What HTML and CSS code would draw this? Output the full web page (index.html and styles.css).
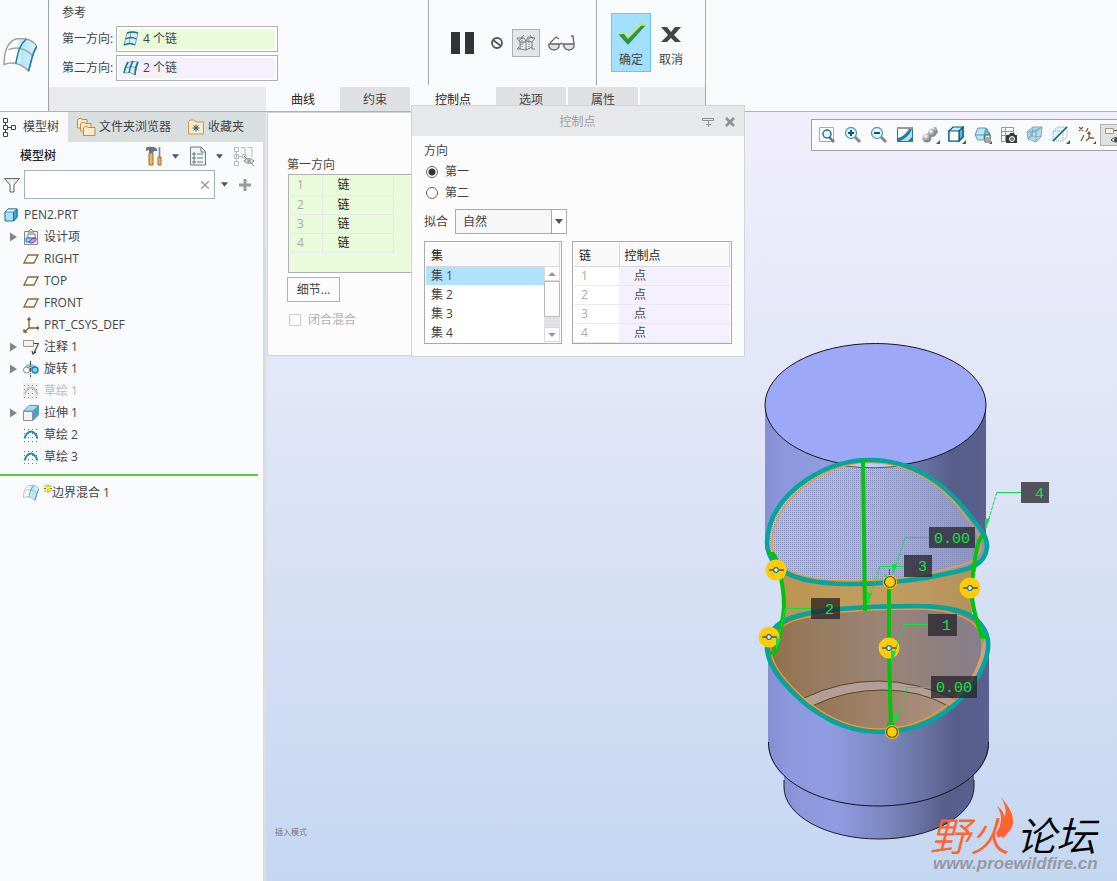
FILE: index.html
```html
<!DOCTYPE html>
<html lang="zh-CN">
  <head>
    <meta charset="UTF-8" />
    <meta name="viewport" content="width=device-width, initial-scale=1.0" />
    <title>PEN2.PRT</title>
    <link rel="stylesheet" href="styles.css" />
  </head>
  <body>
    <!-- Shared icons -->
    <svg class="sprite" aria-hidden="true">
      <linearGradient id="quiltFill" x1="0" y1="0" x2="1" y2="0">
        <stop offset="0.35" stop-color="#fff" />
        <stop offset="0.55" stop-color="#b5e4fb" />
        <stop offset="1" stop-color="#d9f2fe" />
      </linearGradient>
      <symbol id="quilt" viewBox="0 0 32 32">
        <path d="M1 25C1 14 4 4 12 1C18 0 27 0 32 8C28 13 27 22 24 31C17 24 9 22 1 25Z" fill="url(#quiltFill)" stroke="#a2a2a2" stroke-width="1.4" />
        <path d="M5 11C14 7 23 11 28 17" fill="none" stroke="#a2a2a2" stroke-width="1.4" />
        <path d="M22 1C14 8 14 16 12 24M32 8C27 14 27 22 24 31" fill="none" stroke="#177fae" stroke-width="1.4" />
      </symbol>
      <symbol id="plane" viewBox="0 0 16 16">
        <path d="M5 4H15L11 12H1Z" fill="none" stroke="#8a6a32" stroke-width="1.3" />
      </symbol>
      <symbol id="sketch" viewBox="0 0 16 16">
        <path d="M1.5 2V15M5.500 2V15M9.500 2V15M13.500 2V15" stroke="#777" stroke-width="1" stroke-dasharray="1 3" />
        <path d="M1.500 11.500Q4 4.500 8 4.500T14.500 11.500" fill="none" stroke="currentColor" stroke-width="2" />
      </symbol>
      <symbol id="expand" viewBox="0 0 8 10">
        <path d="M0 0.500L7 5L0 9.500Z" fill="#858585" />
      </symbol>
      <symbol id="caret" viewBox="0 0 8 5">
        <path d="M0 0H8L4 5Z" fill="#555" />
      </symbol>
      <symbol id="corner" viewBox="0 0 4 4"><path d="M4 0V4H0Z" fill="#555" /></symbol>
    </svg>

    <header class="ribbon">
      <div class="feature-icon">
        <svg width="34" height="34" viewBox="0 0 32 32"><use href="#quilt" /></svg>
      </div>
      <div class="ribbon-body">
        <div class="groups">
          <section class="group references">
            <h2>参考</h2>
            <div class="reference">
              <label for="dir1">第一方向:</label>
              <div class="collector">
                <div class="collector-inner green">
                  <svg width="16" height="16" viewBox="0 0 16 16">
                    <path d="M1 14L4 2Q9 0 15 2L12 14Q7 11 1 14Z" fill="#d4effb" stroke="#999" />
                    <path d="M8 1L6 13" stroke="#999" />
                    <path d="M4 2Q9 0 15 2M2.500 8Q8 5 13.500 8M1 14Q7 11 12 14" fill="none" stroke="#177196" stroke-width="1.400" />
                  </svg>
                  <input id="dir1" type="text" value="4 个链" readonly />
                </div>
              </div>
            </div>
            <div class="reference">
              <label for="dir2">第二方向:</label>
              <div class="collector">
                <div class="collector-inner violet">
                  <svg width="16" height="16" viewBox="0 0 16 16">
                    <path d="M1 13L4 3Q9 0 15 2L12 15Q7 11 1 13Z" fill="#d4effb" stroke="#999" />
                    <path d="M2.500 8Q8 5 13.500 8" fill="none" stroke="#999" />
                    <path d="M5 2Q2 7 1 13M10 1Q7 6 6 13M15 2Q12 7 12 15" fill="none" stroke="#177196" stroke-width="1.500" />
                  </svg>
                  <input id="dir2" type="text" value="2 个链" readonly />
                </div>
              </div>
            </div>
          </section>

          <section class="group tools">
            <button type="button" class="tool" aria-label="暂停">
              <svg width="24" height="24" viewBox="0 0 24 24"><path d="M1 1H10V23H1ZM15 1H24V23H15Z" fill="#333" /></svg>
            </button>
            <button type="button" class="tool" aria-label="无预览">
              <svg width="14" height="14" viewBox="0 0 14 14">
                <circle cx="7" cy="7" r="5" fill="none" stroke="#555" stroke-width="1.800" />
                <path d="M3 4L11 10" stroke="#555" stroke-width="1.800" />
              </svg>
            </button>
            <button type="button" class="tool pressed" aria-label="分离预览">
              <svg width="20" height="18" viewBox="0 0 20 18" fill="none" stroke="#666" stroke-width="0.800">
                <path d="M1 4H8L10 7L12 3L19 4L16 8V15H19M1 4L4 8V15H1L3 13M4 8H10V16L4 15M10 16L16 13M8 1L3 7M14 1L17 5M10 7L16 8" />
                <path d="M6 2V14M13 4V16M4 11L16 3" stroke-dasharray="1 1" />
              </svg>
            </button>
            <button type="button" class="tool" aria-label="校核预览">
              <svg width="28" height="16" viewBox="0 0 28 16" stroke="#666" stroke-width="1.300">
                <path d="M1 9H11V12Q9 15 6 15T1 12ZM16 9H26V12Q24 15 21 15T16 12Z" fill="#d7e5ec" />
                <path d="M2 8L8 2L11 4M11 10Q13 7 16 10M26 9L25 1H23" fill="none" />
              </svg>
            </button>
          </section>

          <section class="group confirm">
            <button type="button" class="action ok">
              <svg width="32" height="28" viewBox="0 0 32 28">
                <path d="M3 13L9 12L13 17L26 4H31L13 24Z" fill="#2d9255" />
                <path d="M3 13L9 12L13 17L26 4H31" fill="none" stroke="#c7ee24" stroke-width="1.300" />
              </svg>
              <span>确定</span>
            </button>
            <button type="button" class="action">
              <svg width="32" height="28" viewBox="0 0 32 28">
                <path d="M6 6H12L16 11L20 6H26L19 14L26 21H20L16 17L12 21H6L13 14Z" fill="#444" />
              </svg>
              <span>取消</span>
            </button>
          </section>
        </div>

        <nav class="tabs">
          <span class="tab-fill first"></span>
          <button type="button" class="tab open">曲线</button>
          <button type="button" class="tab">约束</button>
          <button type="button" class="tab open">控制点</button>
          <button type="button" class="tab">选项</button>
          <button type="button" class="tab">属性</button>
          <span class="tab-fill last"></span>
        </nav>
      </div>

      <!-- Flyout panels -->
      <section class="panel curves">
        <h3>第一方向</h3>
        <div class="chain-box">
          <table class="chains">
            <tr><td class="num">1</td><td>链</td></tr>
            <tr><td class="num">2</td><td>链</td></tr>
            <tr><td class="num">3</td><td>链</td></tr>
            <tr><td class="num">4</td><td>链</td></tr>
          </table>
        </div>
        <button type="button" class="details">细节...</button>
        <div class="check">
          <input type="checkbox" id="closed" disabled />
          <label for="closed">闭合混合</label>
        </div>
      </section>

      <section class="panel points">
        <header class="panel-title">
          <h3>控制点</h3>
          <button type="button" aria-label="固定">
            <svg width="14" height="12" viewBox="0 0 14 12"><path d="M1.500 2.500H12.500V4.500H1.500Z" fill="none" stroke="#909090" /><path d="M7.500 5V11M5 8.500H10" stroke="#909090" /></svg>
          </button>
          <button type="button" aria-label="关闭">
            <svg width="10" height="10" viewBox="0 0 10 10"><path d="M1 1L9 9M9 1L1 9" stroke="#909090" stroke-width="2.600" /></svg>
          </button>
        </header>
        <div class="panel-body">
          <fieldset>
            <legend>方向</legend>
            <div class="radio"><input type="radio" name="direction" id="first" checked /><label for="first">第一</label></div>
            <div class="radio"><input type="radio" name="direction" id="second" /><label for="second">第二</label></div>
          </fieldset>
          <div class="fit">
            <label for="fit">拟合</label>
            <div class="select">
              <select id="fit"><option>自然</option></select>
              <span class="select-arrow"><svg width="8" height="5"><use href="#caret" /></svg></span>
            </div>
          </div>
          <div class="lists">
            <div class="list sets">
              <table>
                <thead><tr><th>集</th></tr></thead>
                <tbody>
                  <tr class="selected"><td>集 1</td></tr>
                  <tr><td>集 2</td></tr>
                  <tr><td>集 3</td></tr>
                  <tr><td>集 4</td></tr>
                </tbody>
              </table>
              <div class="scrollbar">
                <button type="button" aria-label="向上"><svg width="8" height="4" viewBox="0 0 8 4"><path d="M0 4L4 0L8 4Z" fill="#999" /></svg></button>
                <div class="track"><div class="thumb"></div></div>
                <button type="button" aria-label="向下"><svg width="8" height="4" viewBox="0 0 8 4"><path d="M0 0L4 4L8 0Z" fill="#999" /></svg></button>
              </div>
            </div>
            <div class="list pairs">
              <table>
                <thead><tr><th>链</th><th>控制点</th></tr></thead>
                <tbody>
                  <tr><td class="num">1</td><td>点</td></tr>
                  <tr><td class="num">2</td><td>点</td></tr>
                  <tr><td class="num">3</td><td>点</td></tr>
                  <tr><td class="num">4</td><td>点</td></tr>
                </tbody>
              </table>
            </div>
          </div>
        </div>
      </section>
    </header>

    <main class="workspace">
      <aside class="sidebar">
        <nav class="side-tabs">
          <button type="button" class="side-tab active">
            <svg width="16" height="20" viewBox="0 0 16 20" fill="none" stroke="#444"><path d="M3.500 1.500H7.500V5.500H3.500ZM3.500 8.500H7.500V12.500H3.500ZM3.500 15.500H7.500V19.500H3.500ZM11.500 8.500H15.500V12.500H11.500ZM5.500 5.500V8.500M5.500 12.500V15.500M7.500 10.500H11.500" /></svg>
            模型树
          </button>
          <button type="button" class="side-tab">
            <svg width="20" height="20" viewBox="0 0 20 20" fill="#fdebc8" stroke="#c08b3e"><path d="M1.500 11V2.500Q4 0 7 2.500H11V11Z" /><path d="M4.500 14V6.500Q7 4 10 6.500H15V14Z" /><path d="M7.500 18.500V10.500Q10 8 13 10.500H19V18.500Z" /></svg>
            文件夹浏览器
          </button>
          <button type="button" class="side-tab">
            <svg width="18" height="18" viewBox="0 0 18 18"><path d="M1.500 16V3.500L3 2H7L9 4H16.500V16Z" fill="#fdebc8" stroke="#c79752" /><path d="M9 6.500V13.500M5.500 10H12.500M6.500 7.500L11.500 12.500M11.500 7.500L6.500 12.500" stroke="#145a7a" stroke-width="1" /></svg>
            收藏夹
          </button>
        </nav>
        <div class="tree-head">
          <h2>模型树</h2>
          <button type="button" aria-label="设置">
            <svg width="18" height="20" viewBox="0 0 18 20"><path d="M4 7H8V19H4ZM13 11H16V19H13Z" fill="#eab765" stroke="#9c6d2b" /><path d="M1 2Q2 0 9 1L12 3V5H9L8 7H4V4L1 5Z" fill="#69737d" /><path d="M14.500 1V11" stroke="#7b8792" stroke-width="1.600" /></svg>
            <svg width="7" height="5" class="caret"><use href="#caret" /></svg>
          </button>
          <button type="button" aria-label="显示">
            <svg width="18" height="20" viewBox="0 0 18 20"><path d="M1.500 1H12L16.500 5.500V19H1.500Z" fill="#eef5f8" stroke="#777" /><path d="M12 1V6H16" fill="none" stroke="#777" /><path d="M8 8H14M8 12H14M8 16H14" stroke="#777" /><path d="M4 7H6V9H4ZM4 11H6V13H4ZM4 15H6V17H4Z" fill="none" stroke="#555" stroke-width=".8" /></svg>
            <svg width="7" height="5" class="caret"><use href="#caret" /></svg>
          </button>
          <button type="button" aria-label="隐藏列">
            <svg width="22" height="20" viewBox="0 0 22 20" fill="none" stroke="#bbb"><path d="M1.500 1.500H5.500V5.500H1.500ZM1.500 8.500H5.500V12.500H1.500ZM1.500 15.500H5.500V19.500H1.500ZM3.500 5.500V15.500M5.500 10.500H9M8 1.500H12V16M14.500 1.500H19V11M9.500 8.500H13V12H9.500Z" /><path d="M11 15Q16 10 21 15Q16 20 11 15ZM11 10L21 20" stroke="#888" /><circle cx="16" cy="15" r="2" fill="#999" /></svg>
          </button>
        </div>
        <div class="filter">
          <svg width="16" height="16" viewBox="0 0 16 16"><path d="M0.500 1.500H15.500L10 8V15H6V8Z" fill="#e4e6e8" stroke="#666" /><path d="M8 3V14" stroke="#fff" stroke-width="2" /></svg>
          <div class="search">
            <input type="text" aria-label="过滤" />
            <button type="button" aria-label="清除"><svg width="8" height="8" viewBox="0 0 8 8"><path d="M0 0L8 8M8 0L0 8" stroke="#999" stroke-width="1.300" /></svg></button>
          </div>
          <svg width="7" height="5" class="caret"><use href="#caret" /></svg>
          <button type="button" class="add" aria-label="添加"><svg width="12" height="12" viewBox="0 0 12 12"><path d="M6 0V12M0 6H12" stroke="#9a9a9a" stroke-width="3" /></svg></button>
        </div>
        <ul class="tree">
          <li class="root">
            <svg width="14" height="14" viewBox="0 0 14 14" stroke="#1c6e93"><path d="M1 4L4 1H13V9L9.500 13H1Z" fill="#a7e4fb" /><path d="M9.500 4L13 1V9L9.500 13Z" fill="#3ba7d6" /><path d="M1 4L4 1H13L9.500 4Z" fill="#e3f7ff" stroke-width=".7" /></svg>
            PEN2.PRT
          </li>
          <li>
            <svg width="8" height="10"><use href="#expand" /></svg>
            <svg width="16" height="16" viewBox="0 0 16 16"><path d="M1.500 2.500H14.500V15.500H1.500Z" fill="#eee" stroke="#888" /><path d="M5 3L8 0L11 3Z" fill="#eee" stroke="#777" /><path d="M5 5H12V9H5Z" fill="#fff" stroke="#777" /><path d="M3 9H11V13H3Z" fill="#93d7f0" stroke="#2584aa" /><path d="M6 13Q8 9 13 9Q14 13 8 14Z" fill="#c9a3e6" stroke="#6a3c9b" /></svg>
            设计项
          </li>
          <li><i></i><svg width="16" height="16"><use href="#plane" /></svg>RIGHT</li>
          <li><i></i><svg width="16" height="16"><use href="#plane" /></svg>TOP</li>
          <li><i></i><svg width="16" height="16"><use href="#plane" /></svg>FRONT</li>
          <li>
            <i></i>
            <svg width="16" height="16" viewBox="0 0 16 16" fill="none" stroke="#80602a" stroke-width="1.300"><path d="M6 1V11H16M6 11L1 15M4.500 3L6 1L7.500 3M14 9.500L16 11L14 12.500M1 12V15H4" /></svg>
            PRT_CSYS_DEF
          </li>
          <li>
            <svg width="8" height="10"><use href="#expand" /></svg>
            <svg width="16" height="16" viewBox="0 0 16 16"><path d="M0.500 1.500H10.500V7.500H0.500Z" fill="#fdf1d6" stroke="#999" /><path d="M10.500 4.500H15.500L11 14M9 12L10 15L13 13" fill="none" stroke="#444" stroke-width="1.200" /></svg>
            注释 1
          </li>
          <li>
            <svg width="8" height="10"><use href="#expand" /></svg>
            <svg width="16" height="16" viewBox="0 0 16 16"><path d="M2 5Q7 1 13 5L12 9H4Z" fill="#7cc6e4" /><circle cx="3.500" cy="9" r="3" fill="#fff" stroke="#888" /><circle cx="12" cy="9" r="3" fill="#79d5f7" stroke="#177fae" stroke-width="1.300" /><path d="M7.500 0V16" stroke="#444" stroke-dasharray="4 1 1 1" /></svg>
            旋转 1
          </li>
          <li class="suppressed"><i></i><svg width="16" height="16"><use href="#sketch" /></svg>草绘 1</li>
          <li>
            <svg width="8" height="10"><use href="#expand" /></svg>
            <svg width="16" height="16" viewBox="0 0 16 16"><path d="M0.500 6L6 0.500H15.500L10 6Z" fill="#a5dbf0" stroke="#589db9" /><path d="M10 6L15.500 0.500V10L10 15.500Z" fill="#4aa3c7" stroke="#589db9" /><path d="M0.500 6.500H9.500V15.500H0.500Z" fill="#f2f2f2" stroke="#8e8e8e" /></svg>
            拉伸 1
          </li>
          <li><i></i><svg width="16" height="16" class="sketch"><use href="#sketch" /></svg>草绘 2</li>
          <li><i></i><svg width="16" height="16" class="sketch"><use href="#sketch" /></svg>草绘 3</li>
        </ul>
        <div class="insert-line"></div>
        <ul class="tree pending">
          <li>
            <i></i><svg width="16" height="16"><use href="#quilt" /></svg>
            <span class="new-item"><svg width="8" height="9" viewBox="0 0 9 9"><path d="M4.500 0V9M0 4.500H9M1 1L8 8M8 1L1 8" stroke="#444" /><path d="M2 2H7V7H2Z" fill="#fff100" /></svg>边界混合 1</span>
          </li>
        </ul>
      </aside>

      <section class="viewport">
        <svg class="scene" viewBox="266 112 851 769" preserveAspectRatio="xMaxYMax meet">
          <defs>
            <linearGradient id="body" x1="0" x2="1">
              <stop offset="0" stop-color="#8490d2" />
              <stop offset="0.080" stop-color="#8c97dc" />
              <stop offset="0.280" stop-color="#909ce1" />
              <stop offset="0.550" stop-color="#7a86bd" />
              <stop offset="0.720" stop-color="#6871a3" />
              <stop offset="0.850" stop-color="#565d88" />
              <stop offset="1" stop-color="#5a6190" />
            </linearGradient>
            <linearGradient id="cut" x1="0" x2="1">
              <stop offset="0" stop-color="#b2bdf0" />
              <stop offset="0.500" stop-color="#aab4df" />
              <stop offset="1" stop-color="#8c91ad" />
            </linearGradient>
            <linearGradient id="inside" x1="0" x2="1">
              <stop offset="0" stop-color="#90704a" />
              <stop offset="0.200" stop-color="#967b5f" />
              <stop offset="0.550" stop-color="#9b8478" />
              <stop offset="0.800" stop-color="#8d7e80" />
              <stop offset="1" stop-color="#867f8f" />
            </linearGradient>
            <linearGradient id="gold" x1="0" x2="1">
              <stop offset="0" stop-color="#bc9450" />
              <stop offset="0.500" stop-color="#c39e5f" />
              <stop offset="1" stop-color="#b3925b" />
            </linearGradient>
            <linearGradient id="floor" x1="0" x2="1">
              <stop offset="0" stop-color="#947454" />
              <stop offset="1" stop-color="#ab9284" />
            </linearGradient>
            <pattern id="dots" width="2" height="2" patternUnits="userSpaceOnUse">
              <rect width="1" height="1" fill="#8790bd" />
            </pattern>
            <path id="upperLoop" d="M870 460C915 460 948 487 967 512C978 526 988 535 987 548C985 564 972 568 955 572C925 579 890 584 850 584C810 584 785 576 775 564C765 552 766 537 770 525C780 492 823 460 870 460Z" />
            <path id="lowerLoop" d="M917 606C945 606 968 611 978 621C988 631 991 645 985 661C975 690 940 732 880 732C830 732 797 698 783 682C774 671 766 658 767 645C768 632 777 623 790 618C820 608 880 606 917 606Z" />
            <clipPath id="lowerClip"><use href="#lowerLoop" /></clipPath>
            <g id="handle">
              <circle r="10.500" fill="#ffcc0a" />
              <path d="M-7 0H8" stroke="#333" stroke-width="1.200" />
              <circle r="2.300" fill="#e6fbff" stroke="#1f6f87" stroke-width="1.200" />
            </g>
            <g id="knob">
              <circle r="7" fill="#ffcc0a" />
              <circle r="5.500" fill="#ffcc0a" stroke="#4c4415" stroke-width="1.200" />
            </g>
          </defs>

          <!-- Solid -->
          <path d="M784 740V787C784 816 827 839 879 839S974 816 974 787V740Z" fill="url(#body)" />
          <path d="M784 780V787C784 816 827 839 879 839S974 816 974 787V780" fill="none" stroke="#1c1f2e" />
          <path d="M768 650V744C768 778 817 806 878 806S989 778 989 744V645Z" fill="url(#body)" />
          <path d="M768.500 742C768 778 817 806 878 806S989 778 988.500 742" fill="none" stroke="#11131c" />
          <path d="M765 405V550L800 575H960L986 545V405Z" fill="url(#body)" />
          <ellipse cx="875.500" cy="405" rx="110.500" ry="61.500" fill="#9da9f6" stroke="#14161f" />

          <!-- Blend surface -->
          <path d="M776 565Q850 595 977 566Q968 590 973 612L960 625H783Q786 590 776 565Z" fill="url(#gold)" />
          <use href="#upperLoop" fill="url(#cut)" />
          <use href="#upperLoop" fill="url(#dots)" />
          <path d="M845 466Q876 470 906 465L875 460Z" fill="#bdcafb" />
          <path d="M845 466Q876 470 906 465" fill="none" stroke="#555" />
          <use href="#lowerLoop" fill="url(#inside)" />
          <g clip-path="url(#lowerClip)">
            <path d="M800 700Q840 681 878 681T960 701L952 708Q918 690 883 690T812 707Z" fill="#b39d98" />
            <path d="M812 706Q845 690 883 690T950 707L920 740H850Z" fill="url(#floor)" />
            <path d="M804 698Q840 681 878 681T960 701M812 706Q845 690 883 690T950 707" fill="none" stroke="#5c451f" />
            <path d="M984 625Q986 665 955 700L970 700L994 650Z" fill="#b8a4a5" />
          </g>
          <g fill="none">
            <path d="M870 462.500C915 462.500 944 488 963 513C974 528 982 538 981 548C978 561 968 564 950 568C925 575 890 581 850 581C812 581 789 574 779 563C770 552 771 538 775 526C786 493 827 462.500 870 462.500Z" stroke="#f59b27" stroke-width="1.300" />
            <path d="M917 609C943 609 964 615 974 624C983 634 984 646 980 660C970 688 935 729 880 729C833 729 800 697 786 680C776 668 770 658 771 646C774 633 780 626 793 621C822 611 880 609 917 609Z" stroke="#f59b27" stroke-width="1.300" />
            <use href="#upperLoop" stroke="#03a59c" stroke-width="4.500" />
            <use href="#lowerLoop" stroke="#03a59c" stroke-width="4.500" />
          </g>

          <!-- Chains -->
          <g fill="none" stroke="#00c40a" stroke-width="4" stroke-linejoin="round">
            <path d="M863 460L865 611" />
            <path d="M889 583V655L891 730" />
            <path d="M768 554H773Q777 558 780 573Q786 600 783 616Q781 630 776 649L774 653H769" />
            <path d="M986 537H981Q977 543 975 560Q970 590 973 604Q975 615 980 631L982 637H987" />
            <path d="M887 725H895" />
          </g>

          <!-- Leaders -->
          <g fill="none" stroke="#0ce048">
            <path d="M1021 492.500H997M929 537.500H905M904 566.500H880M811 608.500H785M928 624.500H904M931 687.500H907" />
            <path d="M997 492L986 528M905 538L894 572M880 566L868 604" stroke-dasharray="4 1" />
          </g>

          <use href="#handle" x="776" y="570" />
          <use href="#handle" x="970" y="588" />
          <use href="#handle" x="769" y="637" />
          <use href="#handle" x="889" y="648" />
          <path d="M889.500 569V577" stroke="#177fae" />
          <use href="#knob" x="890" y="582" />
          <use href="#knob" x="892" y="732" />
          <path d="M904 625L892 660M785 609L777 647M907 687L896 722" fill="none" stroke="#0ce048" stroke-dasharray="4 1" />
          <path d="M985 530L990 518L985 519ZM893 575L897 564L892 564ZM867 604L872 594L867 592ZM891 663L896 652L891 650ZM895 724L899 713L894 713ZM776 650L781 639L776 638ZM884 574L889 577L886 578Z" fill="#0ce048" />

          <!-- Dimension tags -->
          <g class="tag-box">
            <rect x="1021" y="482" width="28" height="21" />
            <rect x="929" y="527" width="46" height="21" />
            <rect x="904" y="555" width="28" height="22" />
            <rect x="811" y="598" width="29" height="21" />
            <rect x="928" y="614" width="29" height="22" />
            <rect x="931" y="676" width="46" height="22" />
          </g>
          <g class="tag-text">
            <text x="1044" y="498">4</text>
            <text x="970" y="543">0.00</text>
            <text x="927" y="571">3</text>
            <text x="834" y="614">2</text>
            <text x="951" y="630">1</text>
            <text x="972" y="692">0.00</text>
          </g>

          <!-- Site mark -->
          <text class="mark fire" x="930" y="851">野火</text>
          <text class="mark" x="1016" y="851">论坛</text>
          <path d="M1001 797C1008 806 1014 813 1013 823C1012 832 1004 835 998 838L996 833C1002 825 1003 815 997 806C1003 810 1004 814 1005 817C1007 809 1004 803 1001 797Z" fill="#ff642f" />
          <text class="mark-url" x="933" y="869">www.proewildfire.cn</text>
        </svg>

        <div class="view-toolbar">
          <button type="button" aria-label="重新调整"><svg width="18" height="18" viewBox="0 0 18 18"><path d="M1.500 1.500H15.500V15.500H1.500Z" fill="#fff" stroke="#aaa" /><path d="M11 11L16 16" stroke="#777" stroke-width="2.500" /><circle cx="9" cy="8" r="4" fill="#e2f5fd" stroke="#1e7498" stroke-width="1.500" /></svg></button>
          <button type="button" aria-label="放大"><svg width="18" height="18" viewBox="0 0 18 18"><path d="M11 11L16 16" stroke="#888" stroke-width="3" /><circle cx="7" cy="7" r="5.500" fill="#e2f5fd" stroke="#5a9ab5" stroke-width="1.300" /><path d="M7 4V10M4 7H10" stroke="#07577b" stroke-width="2" /></svg></button>
          <button type="button" aria-label="缩小"><svg width="18" height="18" viewBox="0 0 18 18"><path d="M11 11L16 16" stroke="#888" stroke-width="3" /><circle cx="7" cy="7" r="5.500" fill="#e2f5fd" stroke="#5a9ab5" stroke-width="1.300" /><path d="M4 7H10" stroke="#07577b" stroke-width="2" /></svg></button>
          <button type="button" aria-label="重画"><svg width="18" height="18" viewBox="0 0 18 18"><path d="M1 1H17V16H1Z" fill="#267da2" /><path d="M2 3H13Q9 10 2 12Z" fill="#fff" /><path d="M16 3V11L12 15H4Q13 11 16 3Z" fill="#b7e1f1" /><path d="M1 1H17V3H1Z" fill="#999" /></svg></button>
          <button type="button" aria-label="显示样式"><svg width="18" height="18" viewBox="0 0 18 18"><radialGradient id="ball" cx=".35" cy=".3"><stop stop-color="#fff" /><stop offset="1" stop-color="#8a8a8a" /></radialGradient><path d="M9 2L14 1L16 6L13 10H8Z" fill="url(#ball)" /><circle cx="10" cy="7" r="4" fill="url(#ball)" /><circle cx="5" cy="12" r="4.500" fill="url(#ball)" /><use href="#corner" x="14" y="14" width="4" height="4" /></svg></button>
          <button type="button" aria-label="着色"><svg width="18" height="18" viewBox="0 0 18 18" stroke="#07577b" stroke-width="1.200"><path d="M1 5L5 1H15V11L11 15H1Z" fill="#bfe9f9" /><path d="M11 5L15 1V11L11 15Z" fill="#5eb7da" /><path d="M1 5H11V15H1Z" fill="#fff" /><use href="#corner" x="14" y="14" width="4" height="4" stroke="none" /></svg></button>
          <button type="button" aria-label="已保存方向"><svg width="18" height="18" viewBox="0 0 18 18"><path d="M1 9L4 2H12L16 8L12 14H4Z" fill="#bde6f6" stroke="#589cb8" /><path d="M1 9H10M10 9L12 2L16 8V13H10Z" fill="#70b5d1" stroke="#589cb8" /><path d="M11 9H16V16H11Z" fill="#fff" stroke="#555" /><path d="M12 12H15M12 14H15" stroke="#555" /><use href="#corner" x="15" y="15" width="3" height="3" /></svg></button>
          <button type="button" aria-label="视图管理器"><svg width="18" height="18" viewBox="0 0 18 18"><path d="M1.500 1.500H13.500V15.500H1.500ZM1 5.500H14M1 9.500H14M5.500 1V16" fill="#fff" stroke="#999" /><path d="M6 9H9L10 7H14L15 9H17V17H6Z" fill="#3a3a3a" /><circle cx="12" cy="13" r="2.500" fill="#777" stroke="#fff" /></svg></button>
          <button type="button" aria-label="透视图"><svg width="18" height="18" viewBox="0 0 18 18" stroke="#80aabd"><path d="M1 6L7 1H16L15 11L10 16L2 13Z" fill="#b3dbeb" /><path d="M1 6L10 6L16 1M10 6V16M7 1L6 10L2 13M6 10L15 11" fill="#84bdd6" /></svg></button>
          <button type="button" aria-label="剖面"><svg width="18" height="18" viewBox="0 0 18 18"><path d="M1 6L5 1H15L1 15Z" fill="#dff3fa" /><path d="M1 6L5 1H15V11L11 15H1ZM1 5H11V15" fill="none" stroke="#7aa9bd" stroke-dasharray="1 1" /><path d="M1 15L15 1" stroke="#07577b" stroke-width="1.400" /><use href="#corner" x="14" y="14" width="4" height="4" /></svg></button>
          <button type="button" aria-label="基准显示"><svg width="18" height="18" viewBox="0 0 18 18" fill="none" stroke="#80602a" stroke-width="1.300"><path d="M1 1L5 5M5 1L1 5M10 2L8 6M6 9L3 15M11 6V12H16M11 12L8 15M9.500 8L11 6L12.500 8" /><use href="#corner" x="15" y="15" width="3" height="3" stroke="none" /></svg></button>
          <button type="button" class="pressed" aria-label="注释显示"><svg width="18" height="18" viewBox="0 0 18 18"><path d="M1.500 2.500H9.500V7.500H1.500Z" fill="#fdf1d6" stroke="#999" /><path d="M10 4.500H15L13 9" fill="none" stroke="#555" /><path d="M7 14Q12 9 17 14Q12 18 7 14Z" fill="#fff" stroke="#444" /><circle cx="12" cy="14" r="2" fill="#444" /></svg></button>
        </div>

        <p class="mode">插入模式</p>
      </section>
    </main>
  </body>
</html>
```

FILE: styles.css
```css
* {
  box-sizing: border-box;
}

body {
  font-family: "Open Sans", "Noto Sans CJK SC", sans-serif;
  font-size: 12px;
  line-height: 18px;
  color: #444;
  margin: 0;
  min-height: 100vh;
  display: flex;
  flex-direction: column;
  background-color: #f8fafc;
}

h2,
h3,
p,
ul,
fieldset {
  margin: 0;
  padding: 0;
  border: none;
  font-size: 12px;
  font-weight: normal;
}

button,
input,
select {
  font: inherit;
  color: inherit;
}

button {
  background: none;
  border: none;
  padding: 0;
  display: flex;
  align-items: center;
  justify-content: center;
}

table {
  border-collapse: collapse;
}

td,
th {
  padding: 0;
  font-weight: normal;
  text-align: left;
}

svg {
  display: block;
  flex: none;
}

.sprite {
  position: absolute;
  width: 0;
  height: 0;
}

/* Ribbon */
.ribbon {
  position: relative;
  z-index: 1;
  display: flex;
  height: 112px;
  border-bottom: 1px solid #adb3b3;
}

.feature-icon {
  width: 49px;
  padding: 38px 3px;
  border-right: 1px solid #9aa5a5;
}

.ribbon-body {
  display: flex;
  flex-direction: column;
  border-right: 1px solid #a3a9a9;
}

.groups {
  display: flex;
  height: 87px;
}

.group {
  display: flex;
  height: 85px;
}

.references {
  flex-direction: column;
  width: 380px;
  padding: 4px 13px;
  gap: 3px;
  border-right: 1px solid #a3a9a9;
}

.reference {
  display: flex;
  align-items: center;
  gap: 3px;
}

.references h2 {
  margin-bottom: 1px;
}

.collector {
  width: 162px;
  height: 26px;
  padding: 2px;
  background-color: #fff;
  border: 1px solid #b0b0b0;
}

.reference label {
  width: 51px;
  white-space: nowrap;
}

.collector-inner {
  display: flex;
  align-items: center;
  gap: 4px;
  height: 20px;
  padding-left: 4px;
}

.collector-inner input {
  width: 100px;
  padding: 0;
  border: none;
  background: none;
}

.green {
  background-color: #eafbdc;
}

.violet {
  background-color: #f4f0fd;
}

.tools {
  align-items: center;
  width: 168px;
  padding-left: 21px;
  gap: 8px;
  border-right: 1px solid #a3a9a9;
}

.tool {
  height: 28px;
}

.tool:first-child {
  margin-right: 8px;
}

.tool.pressed {
  width: 28px;
  background-color: #e4e5e7;
  border: 1px solid #b0b0b0;
}

.confirm {
  padding: 13px 14px;
}

.action {
  flex-direction: column;
  width: 40px;
  height: 59px;
  gap: 2px;
  padding-top: 5px;
}

.action.ok {
  background-color: #a3dfff;
  border: 1px solid #67c5f8;
}

.tabs {
  display: flex;
  gap: 2px;
  height: 24px;
}

.tab {
  padding: 2px 23px 0;
  background-color: #dfe0e1;
}

.tab.open {
  background-color: #f8fafc;
  color: #222;
}

.tab-fill {
  background-color: #e9eaec;
}

.tab-fill.first {
  width: 217px;
}

.tab-fill.last {
  width: 65px;
}

/* Flyout panels */
.panel {
  position: absolute;
  background-color: #fcfcfc;
  border: 1px solid #cfd5d5;
}

.curves {
  top: 112px;
  left: 267px;
  width: 145px;
  height: 244px;
  padding: 43px 0 0 19px;
  overflow: hidden;
}

.chain-box {
  height: 99px;
  margin: 0 0 4px 1px;
  padding: 1px;
  background-color: #eafbdc;
  border: 1px solid #b0b0b0;
  border-right: none;
}

.chains td {
  width: 71px;
  height: 19px;
  padding-left: 15px;
  border-right: 1px solid #e6e8ee;
  border-bottom: 1px solid #e6e8ee;
  color: #222;
}

.chains .num {
  width: 32px;
  padding-left: 7px;
}

.chains .num,
.pairs .num {
  color: #aaa;
}

.details {
  width: 53px;
  height: 25px;
  border: 1px solid #b0b0b0;
}

.check {
  display: flex;
  align-items: center;
  gap: 7px;
  margin: 9px 0 0 2px;
  color: #b0b0b0;
}

.check input {
  appearance: none;
  width: 12px;
  height: 12px;
  margin: 0;
  border: 1px solid #d0d0d0;
}

.points {
  top: 105px;
  left: 411px;
  width: 334px;
}

.panel-title {
  display: flex;
  align-items: center;
  gap: 10px;
  height: 30px;
  padding: 1px 9px 0 0;
  background-color: #e6e8ea;
  color: #a0a0a0;
}

.panel-title h3 {
  flex: 1;
  padding-left: 52px;
  text-align: center;
}

.panel-body {
  padding: 6px 12px 12px;
}

legend {
  padding: 0;
  height: 19px;
}

.radio {
  display: flex;
  align-items: center;
  gap: 7px;
  height: 21px;
  padding-left: 2px;
}

.radio input {
  appearance: none;
  width: 12px;
  height: 12px;
  margin: 0;
  border: 1px solid #666;
  border-radius: 50%;
  background-color: #fff;
}

.radio input:checked {
  background: radial-gradient(circle, #333 3px, #fff 4px);
}

.fit {
  display: flex;
  align-items: center;
  gap: 7px;
  margin: 6px 0 7px;
}

.select {
  display: grid;
  width: 112px;
  height: 25px;
}

.select select,
.select-arrow {
  grid-area: 1 / 1;
}

.select select {
  appearance: none;
  padding: 0 7px;
  background-color: #f7f7f7;
  border: 1px solid #a9a9a9;
  border-radius: 0;
}

.select-arrow {
  display: flex;
  align-items: center;
  justify-content: center;
  justify-self: end;
  width: 16px;
  border: 1px solid #a9a9a9;
  background-color: #fff;
  pointer-events: none;
}

.lists {
  display: flex;
  gap: 10px;
}

.list {
  height: 103px;
  padding: 1px;
  background-color: #fff;
  border: 1px solid #a9a9a9;
}

.list table {
  width: 100%;
}

.list th {
  height: 23px;
  padding: 3px 0 0 5px;
  background-color: #f9f9f9;
  border-right: 1px solid #d4d8d8;
  border-bottom: 1px solid #d4d8d8;
  color: #222;
}

.list td {
  height: 19px;
}

.sets {
  display: grid;
  width: 138px;
}

.sets table,
.scrollbar {
  grid-area: 1 / 1;
}

.sets td {
  padding-left: 5px;
}

.selected td {
  background-color: #afe2ff;
}

.scrollbar {
  display: flex;
  flex-direction: column;
  justify-self: end;
  width: 16px;
  height: 76px;
  margin-top: 23px;
  background-color: #fff;
}

.scrollbar button {
  height: 15px;
  border: 1px solid #dadada;
}

.track {
  flex: 1;
  background-color: #e0e1e3;
}

.thumb {
  height: 36px;
  background-color: #fbfbfb;
  border: 1px solid #bbb;
}

.pairs {
  width: 160px;
}

.pairs td {
  padding-left: 15px;
  background-color: #f4f0fd;
  border-bottom: 1px solid #e8e8ee;
}

.pairs .num {
  width: 45px;
  padding-left: 7px;
  background-color: #fff;
}

/* Workspace */
.workspace {
  flex: 1;
  display: grid;
  grid-template-columns: 266px 1fr;
}

.sidebar {
  border-right: 3px solid #d9dfdf;
}

.side-tabs {
  display: flex;
  height: 30px;
  background-color: #d9dfdf;
}

.side-tab {
  gap: 3px;
  padding: 0 8px;
}

.side-tab.active {
  gap: 7px;
  width: 68px;
  padding: 0 9px 0 0;
  background-color: #f8fafc;
}

.tree-head {
  display: flex;
  align-items: center;
  gap: 10px;
  height: 28px;
  padding-left: 20px;
}

.tree-head h2 {
  width: 115px;
  font-weight: 500;
  color: #222;
}

.tree-head button {
  gap: 9px;
}

.filter {
  display: flex;
  align-items: center;
  gap: 6px;
  padding-left: 4px;
}

.search {
  display: flex;
  align-items: center;
  width: 191px;
  height: 29px;
  margin-left: -2px;
  padding-right: 5px;
  background-color: #fff;
  border: 1px solid #a4b4b4;
}

.search input {
  flex: 1;
  min-width: 0;
  border: none;
  outline: none;
  background: none;
}

.add {
  margin-left: 5px;
}

.tree {
  list-style: none;
  margin-top: 5px;
}

.tree li {
  display: flex;
  align-items: center;
  height: 22px;
  gap: 5px;
  padding-left: 10px;
}

.tree li i {
  width: 8px;
}

.tree .root {
  gap: 6px;
  padding-left: 4px;
}

.sketch {
  color: #2489b8;
}

.suppressed {
  color: #bcbcbc;
}

.suppressed svg {
  background-color: #ececec;
  color: #bbb69d;
  opacity: 0.8;
}

.insert-line {
  height: 2px;
  width: 258px;
  margin-top: 6px;
  background-color: #5ec93f;
}

.pending {
  margin-top: 6px;
}

.new-item {
  display: flex;
}

.viewport {
  display: grid;
  overflow: hidden;
  background: linear-gradient(#f1eefc, #e4e7f8 32%, #c4d7f1);
}

.scene,
.view-toolbar,
.mode {
  grid-area: 1 / 1;
}

.scene {
  width: 100%;
  height: 100%;
}

.tag-box {
  fill: #24222a;
  fill-opacity: 0.75;
}

.tag-text {
  font-family: "Liberation Mono", monospace;
  font-size: 15px;
  text-anchor: end;
  fill: #16e04c;
}

.mark {
  font-family: "Noto Sans CJK SC", sans-serif;
  font-size: 40px;
  font-style: italic;
  font-weight: 350;
  fill: #000;
}

.mark.fire {
  fill: #ff642f;
}

.mark-url {
  font-family: "Liberation Sans", sans-serif;
  font-size: 17px;
  font-style: italic;
  font-weight: bold;
  fill: #959aa3;
}

.view-toolbar {
  display: flex;
  align-items: center;
  align-self: start;
  justify-self: end;
  width: 306px;
  height: 32px;
  margin-top: 7px;
  padding-left: 2px;
  background-color: #f8fafc;
  border: 1px solid #a0a0a5;
  border-right: none;
  overflow: hidden;
}

.view-toolbar button {
  flex: none;
  width: 26px;
  height: 22px;
}

.view-toolbar .pressed {
  background-color: #e0e1e3;
  border: 1px solid #b0b0b0;
}

.mode {
  align-self: end;
  margin: 0 0 40px 9px;
  font-size: 8px;
  color: #777;
}
```
